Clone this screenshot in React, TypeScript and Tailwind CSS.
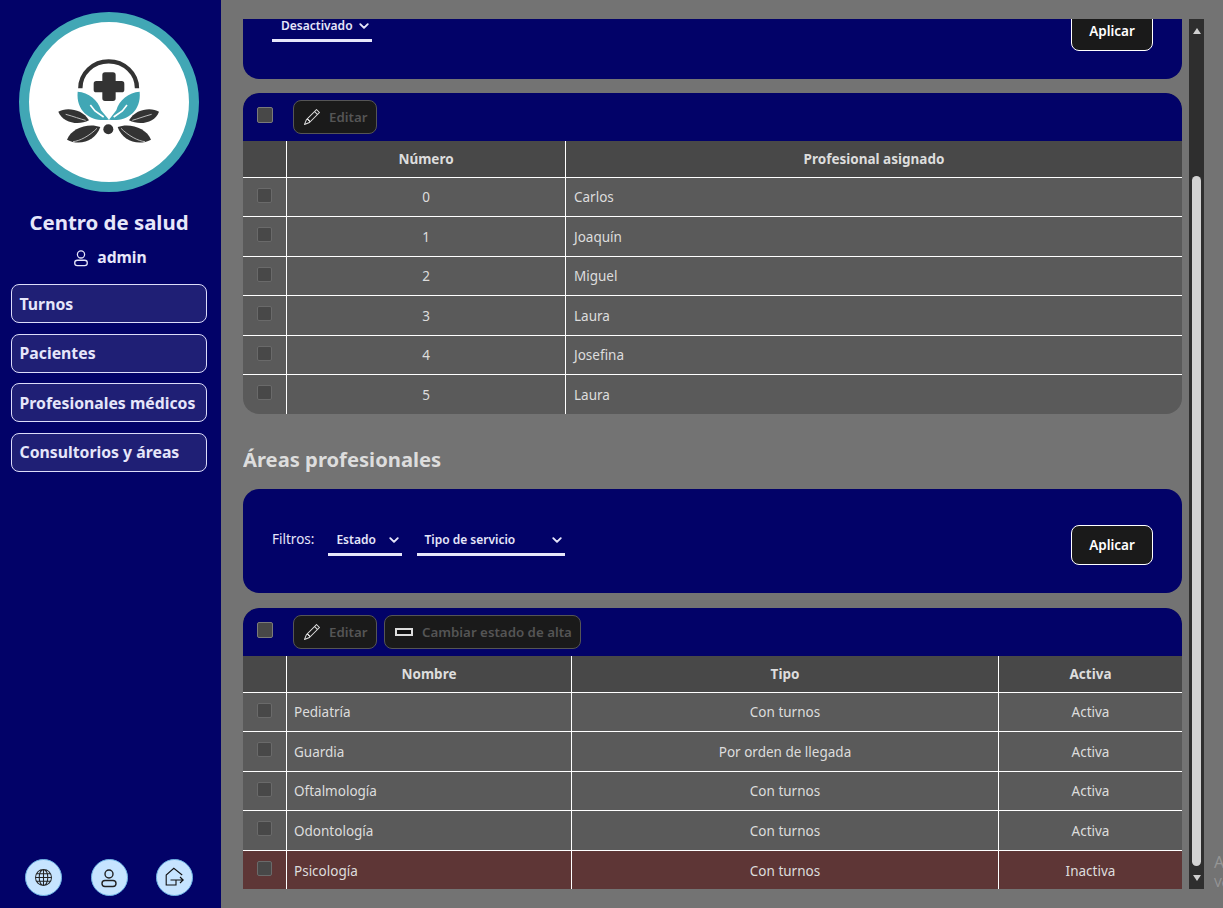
import { BsChevronDown, BsGlobe, BsPencil } from 'react-icons/bs';

const font = "font-['Noto_Sans','Open_Sans',sans-serif]";

const navItems = ['Turnos', 'Pacientes', 'Profesionales médicos', 'Consultorios y áreas'];

const numberRows = [
    ['0', 'Carlos'],
    ['1', 'Joaquín'],
    ['2', 'Miguel'],
    ['3', 'Laura'],
    ['4', 'Josefina'],
    ['5', 'Laura'],
];

const areaRows = [
    ['Pediatría', 'Con turnos', 'Activa'],
    ['Guardia', 'Por orden de llegada', 'Activa'],
    ['Oftalmología', 'Con turnos', 'Activa'],
    ['Odontología', 'Con turnos', 'Activa'],
    ['Psicología', 'Con turnos', 'Inactiva'],
];

function Logo() {
    return (
        <svg width="180" height="180" viewBox="0 0 180 180" className="shrink-0 mr-[3px]">
            <circle cx="90" cy="90" r="85" fill="#fff" stroke="#41a7b5" strokeWidth="10" />
            <g transform="translate(26 33) scale(0.3333)">
                <path d="M106 130 A84 80 0 0 1 276 130" fill="none" stroke="#333" strokeWidth="13" />
                <path d="M172 90 a8 8 0 0 1 8 -8 h24 a8 8 0 0 1 8 8 v18 h18 a8 8 0 0 1 8 8 v18 a8 8 0 0 1 -8 8 h-18 v18 a8 8 0 0 1 -8 8 h-24 a8 8 0 0 1 -8 -8 v-18 h-18 a8 8 0 0 1 -8 -8 v-18 a8 8 0 0 1 8 -8 h18 z" fill="#333" />
                <path d="M98 140 C130 142 160 165 168 196 L192 224 C145 232 92 205 98 140 Z" fill="#41a7b5" />
                <path d="M284 140 C252 142 222 165 214 196 L192 224 C237 232 290 205 284 140 Z" fill="#41a7b5" />
                <path d="M136 180 L150 198 L176 216 M246 180 L232 198 L206 216" stroke="#fff" strokeWidth="5" fill="none" />
                <path d="M40 200 C62 186 112 190 132 226 C100 242 54 234 40 200 Z" fill="#333" />
                <path d="M66 284 C78 250 130 232 166 246 C152 288 104 304 66 284 Z" fill="#333" />
                <path d="M342 200 C320 186 272 190 252 226 C284 242 330 234 342 200 Z" fill="#333" />
                <path d="M318 284 C306 250 254 232 218 246 C232 288 280 304 318 284 Z" fill="#333" />
                <path d="M62 208 C85 214 105 222 122 226 M84 290 C105 288 134 272 156 250 M320 208 C297 214 277 222 262 226 M300 290 C279 288 250 272 228 250" stroke="#bbb" strokeWidth="3" fill="none" />
                <circle cx="190" cy="253" r="15" fill="#333" />
            </g>
        </svg>
    );
}

function PersonIcon({ size }: { size: number }) {
    return (
        <svg width={size} height={size} viewBox="0 0 20 20" fill="none" stroke="currentColor" strokeWidth="1.4">
            <circle cx="10" cy="6" r="4" />
            <rect x="3" y="12.5" width="14" height="6" rx="3" />
        </svg>
    );
}

function LeaveIcon() {
    return (
        <svg width="22" height="22" viewBox="0 0 22 22" fill="none" stroke="#111" strokeWidth="1.1">
            <path d="M18.2 8 L9.8 1.3 L2.2 8 V18 H12 V13" />
            <path d="M6.5 13 H19.2 M16 10 L19.2 13 L16 16" />
        </svg>
    );
}

function RoundButton({ children }: { children: React.ReactNode }) {
    return (
        <button className="w-[37px] h-[37px] rounded-full bg-[#c6e4ff] border border-[#6eb4e4] flex items-center justify-center text-[#222]">
            {children}
        </button>
    );
}

function Sidebar() {
    return (
        <aside className="w-[221px] shrink-0 h-full bg-[#020268] flex flex-col items-center pt-3 pb-[12px]">
            <Logo />
            <h1 className="mt-[14px] text-[20.4px] leading-[32px] font-bold text-[#e6e6fa] mr-[3px]">Centro de salud</h1>
            <div className="mt-[7px] h-[26px] flex items-center gap-[7px] text-[#e6e6fa] text-[15.7px] font-bold mr-[2px]">
                <PersonIcon size={18} />
                <span>admin</span>
            </div>
            <nav className="mt-[13px] w-[196px] ml-[-4px] flex flex-col gap-[10.5px]">
                {navItems.map((item) => (
                    <button
                        key={item}
                        className="h-[39px] rounded-lg border border-[#dcdcfa] bg-[#1f1f75] text-left pl-2 pt-[2px] text-[15.8px] font-bold text-[#e6e6fa] whitespace-nowrap"
                    >
                        {item}
                    </button>
                ))}
            </nav>
            <div className="mt-auto w-full pl-[25px] pr-[28px] flex justify-between">
                <RoundButton><BsGlobe size={17} /></RoundButton>
                <RoundButton><PersonIcon size={20} /></RoundButton>
                <RoundButton><LeaveIcon /></RoundButton>
            </div>
        </aside>
    );
}

function Select({ label, width, textLeft }: { label: string; width: string; textLeft: string }) {
    return (
        <div className={`${width} ${textLeft} h-[31px] pt-[1px] border-b-[3px] border-[#e6e6fa] flex items-center justify-between pr-[3px] text-[#e6e6fa] text-[12px] font-semibold`}>
            <span>{label}</span>
            <BsChevronDown size={10} stroke="currentColor" strokeWidth={2} />
        </div>
    );
}

function FilterCard({ children }: { children: React.ReactNode }) {
    return (
        <div className="h-[104px] rounded-2xl bg-[#020268] px-[29px] pt-[36px] flex justify-between items-start">
            <div className="flex items-start">{children}</div>
            <button className="w-[82px] h-[40px] pt-[1px] rounded-lg bg-[#1a1a1a] border border-white text-white text-[13.5px] font-semibold">
                Aplicar
            </button>
        </div>
    );
}

function Checkbox({ big }: { big?: boolean }) {
    return (
        <span
            className={
                big
                    ? 'block w-4 h-4 rounded-[2px] bg-[#484848] border border-[#7a7a7a]'
                    : 'block w-[15px] h-[15px] rounded-[2px] bg-[#484848] border border-[#6a6a6a]'
            }
        />
    );
}

function ToolButton({ icon, label, width }: { icon: React.ReactNode; label: string; width: string }) {
    return (
        <button className={`${width} h-[34px] rounded-lg bg-[#1a1a1a] border border-[#555] flex items-center gap-[9px] pl-[10px] text-[13.3px] font-semibold text-[#555]`}>
            {icon}
            <span className="relative top-[1px]">{label}</span>
        </button>
    );
}

function Toolbar({ children }: { children: React.ReactNode }) {
    return (
        <div className="h-[48px] rounded-t-2xl bg-[#020268] flex items-start">
            <div className="w-[50px] pl-[14px] pt-[14px]"><Checkbox big /></div>
            <div className="pt-[7px] flex gap-[7px]">{children}</div>
        </div>
    );
}

const editIcon = <BsPencil size={16} className="text-[#ddd]" />;

function NumbersTable() {
    const columns = 'grid grid-cols-[43px_279px_1fr]';
    return (
        <div className="rounded-2xl overflow-hidden bg-[#5a5a5a] mt-[14px]">
            <Toolbar>
                <ToolButton icon={editIcon} label="Editar" width="w-[84px]" />
            </Toolbar>
            <div className={`${columns} h-[36.5px] bg-[#484848] border-b border-white text-[13.5px] font-bold text-[#ddd]`}>
                <div />
                <div className="border-l border-white flex items-center justify-center">Número</div>
                <div className="border-l border-white flex items-center justify-center">Profesional asignado</div>
            </div>
            {numberRows.map((row, i) => (
                <div key={row[0]} className={`${columns} text-[13.5px] text-[#ddd] ${i < numberRows.length - 1 ? 'h-[39.5px] border-b border-white' : 'h-[39px]'}`}>
                    <div className="pl-[14px] pt-[10px]"><Checkbox /></div>
                    <div className="border-l border-white pt-[1px] flex items-center justify-center">{row[0]}</div>
                    <div className="border-l border-white pt-[1px] flex items-center pl-2">{row[1]}</div>
                </div>
            ))}
        </div>
    );
}

function AreasTable() {
    const columns = 'grid grid-cols-[43px_285px_427px_1fr]';
    return (
        <div className="rounded-t-2xl overflow-hidden bg-[#5a5a5a] mt-[15px]">
            <Toolbar>
                <ToolButton icon={editIcon} label="Editar" width="w-[84px]" />
                <ToolButton
                    icon={<span className="block w-[18px] h-[8px] border-2 border-[#ddd] bg-[#111]" />}
                    label="Cambiar estado de alta"
                    width="w-[197px]"
                />
            </Toolbar>
            <div className={`${columns} h-[36.5px] bg-[#484848] border-b border-white text-[13.5px] font-bold text-[#ddd]`}>
                <div />
                <div className="border-l border-white flex items-center justify-center">Nombre</div>
                <div className="border-l border-white flex items-center justify-center">Tipo</div>
                <div className="border-l border-white flex items-center justify-center">Activa</div>
            </div>
            {areaRows.map((row, i) => (
                <div
                    key={row[0]}
                    className={`${columns} h-[39.5px] text-[13.5px] text-[#ddd] ${i < areaRows.length - 1 ? 'border-b border-white' : ''} ${row[2] === 'Inactiva' ? 'bg-[#5e3636]' : ''}`}
                >
                    <div className="pl-[14px] pt-[10px]"><Checkbox /></div>
                    <div className="border-l border-white pt-[1px] flex items-center pl-[7px]">{row[0]}</div>
                    <div className="border-l border-white pt-[1px] flex items-center justify-center">{row[1]}</div>
                    <div className="border-l border-white pt-[1px] flex items-center justify-center">{row[2]}</div>
                </div>
            ))}
        </div>
    );
}

function Scrollbar() {
    return (
        <div className="w-[15px] h-full bg-[#2e2e2e] flex flex-col items-center ml-[7px] shrink-0">
            <div className="h-[23px] flex items-center justify-center">
                <span className="w-0 h-0 border-x-[4.5px] border-x-transparent border-b-[6px] border-b-[#d0d0d0]" />
            </div>
            <div className="mt-[134px] w-[9px] flex-1 rounded-full bg-[#d3d3d3]" />
            <div className="h-[23px] flex items-center justify-center">
                <span className="w-0 h-0 border-x-[4.5px] border-x-transparent border-t-[6px] border-t-[#d0d0d0]" />
            </div>
        </div>
    );
}

export default function App() {
    return (
        <div className={`${font} relative w-[1223px] h-[908px] overflow-hidden flex bg-[#737373]`}>
            <Sidebar />
            <main className="flex-1 min-w-0 pl-[22px] py-[19px] flex h-full">
                <div className="w-[939px] h-full overflow-hidden shrink-0">
                    <div className="-mt-[44px]">
                        {/* Filters scrolled out of view */}
                        <FilterCard>
                            <Select label="Desactivado" width="w-[100px]" textLeft="pl-[9px]" />
                        </FilterCard>
                        <NumbersTable />
                        <h2 className="mt-[29px] h-[33px] leading-[33px] text-[20.2px] font-bold text-[#ddd]">Áreas profesionales</h2>
                        <div className="mt-[13px]">
                            <FilterCard>
                                <span className="text-[13.5px] text-[#e6e6fa] leading-[28px] mr-[14px]">Filtros:</span>
                                <Select label="Estado" width="w-[74px]" textLeft="pl-[8px]" />
                                <div className="w-[15px]" />
                                <Select label="Tipo de servicio" width="w-[148px]" textLeft="pl-[7px]" />
                            </FilterCard>
                        </div>
                        <AreasTable />
                    </div>
                </div>
                <Scrollbar />
            </main>
            {/* Windows activation watermark */}
            <div className="absolute left-[1214px] top-[851px] whitespace-nowrap text-white/25">
                <div className="text-[16px] leading-[22px]">Activar Windows</div>
                <div className="text-[13px] leading-[18px]">Ve a Configuración</div>
            </div>
        </div>
    );
}
